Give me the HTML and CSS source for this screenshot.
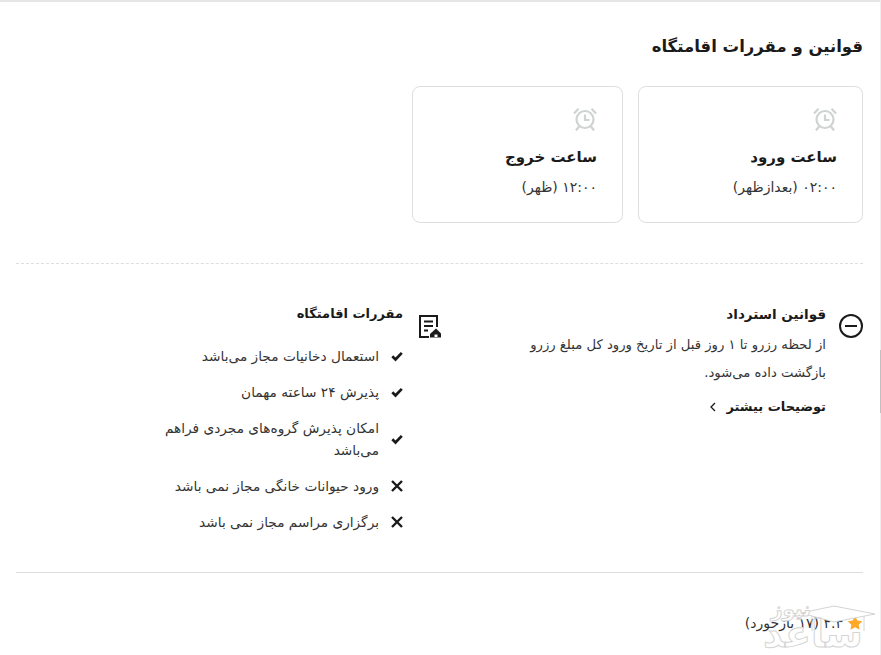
FILE: index.html
```html
<!DOCTYPE html>
<html lang="fa" dir="rtl">
<head>
<meta charset="utf-8">
<title>قوانین و مقررات اقامتگاه</title>
<link rel="stylesheet" href="styles.css">
</head>
<body>
<main class="page">
  <h2 class="title">قوانین و مقررات اقامتگاه</h2>
  <div class="cards">
    <section class="card card-in">
      <svg class="alarm" viewBox="0 0 24 24" fill="none" stroke="#cfd3d3" stroke-width="2.200"><circle cx="12" cy="12.500" r="8.500"/><path d="M12 7.500v5.500h4.500M1 6.500 5.500 1.800M23 6.500 18.500 1.800M6 19.500 3 23.500M18 19.500l3 4"/></svg>
      <h3 class="card-title">ساعت ورود</h3>
      <p class="card-text">۰۲:۰۰ (بعدازظهر)</p>
    </section>
    <section class="card card-out">
      <svg class="alarm" viewBox="0 0 24 24" fill="none" stroke="#cfd3d3" stroke-width="2.200"><circle cx="12" cy="12.500" r="8.500"/><path d="M12 7.500v5.500h4.500M1 6.500 5.500 1.800M23 6.500 18.500 1.800M6 19.500 3 23.500M18 19.500l3 4"/></svg>
      <h3 class="card-title">ساعت خروج</h3>
      <p class="card-text">۱۲:۰۰ (ظهر)</p>
    </section>
  </div>
  <hr class="dash">
  <div class="columns">
    <section class="refund">
      <svg class="minus" viewBox="0 0 24 24" fill="none" stroke="#1a1a1a" stroke-width="2"><circle cx="12" cy="12" r="11"/><path d="M6 12h12"/></svg>
      <div class="refund-body">
        <h4 class="sub">قوانین استرداد</h4>
        <p class="refund-text">از لحظه رزرو تا ۱ روز قبل از تاریخ ورود کل مبلغ رزرو بازگشت داده می‌شود.</p>
        <a class="more">توضیحات بیشتر
          <svg class="chev" viewBox="0 0 8 10" fill="none" stroke="#1a1a1a" stroke-width="1.300"><path d="M6 1 2 5l4 4"/></svg>
        </a>
      </div>
    </section>
    <section class="rules">
      <svg class="doc" viewBox="0 0 24 24" fill="none" stroke="#1a1a1a" stroke-width="2"><path d="M12 23H3V2h17v11M7 7.500h9M7 12h9M7 16.500h4"/><path d="M19 14.500l-6 5.500v3.500h11.500V20z" fill="#1a1a1a" stroke="none"/><path d="M17.500 23v-2.500h3V23" fill="#fff" stroke="none"/></svg>
      <div class="rules-body">
        <h4 class="sub sub-rules">مقررات اقامتگاه</h4>
        <ul class="list">
          <li class="item"><svg class="mark" viewBox="0 0 12 12"><path d="M1.300 6.300 4.500 9.500 10.800 2.800" fill="none" stroke="#1a1a1a" stroke-width="2.700"/></svg><span>استعمال دخانیات مجاز می‌باشد</span></li>
          <li class="item"><svg class="mark" viewBox="0 0 12 12"><path d="M1.300 6.300 4.500 9.500 10.800 2.800" fill="none" stroke="#1a1a1a" stroke-width="2.700"/></svg><span>پذیرش ۲۴ ساعته مهمان</span></li>
          <li class="item"><svg class="mark" viewBox="0 0 12 12"><path d="M1.300 6.300 4.500 9.500 10.800 2.800" fill="none" stroke="#1a1a1a" stroke-width="2.700"/></svg><span>امکان پذیرش گروه‌های مجردی فراهم می‌باشد</span></li>
          <li class="item"><svg class="mark" viewBox="0 0 12 12"><path d="M1 1l10 10M11 1 1 11" fill="none" stroke="#1a1a1a" stroke-width="2.400"/></svg><span>ورود حیوانات خانگی مجاز نمی باشد</span></li>
          <li class="item"><svg class="mark" viewBox="0 0 12 12"><path d="M1 1l10 10M11 1 1 11" fill="none" stroke="#1a1a1a" stroke-width="2.400"/></svg><span>برگزاری مراسم مجاز نمی باشد</span></li>
        </ul>
      </div>
    </section>
  </div>
  <hr class="solid">
  <div class="rating">
    <svg class="star" viewBox="0 0 24 24"><path d="M12 1l3.400 7.200 7.600 1-5.600 5.300 1.500 7.800L12 18.500l-6.900 3.800 1.500-7.800L1 9.200l7.600-1z" fill="#ffa726"/></svg>
    <span>۴.۳ (۱۷ بازخورد)</span>
  </div>
</main>
<div class="scroll-track"><div class="scroll-thumb"></div></div>
<div class="watermark">
  <svg class="cap" viewBox="0 0 76 30" fill="#fff" stroke="#d4d4d4"><path d="M1 8 34 1l41 8-41 8zM12 11v15M64 11v15"/></svg>
  <span class="wm-small">نیوز</span>
  <span class="wm-big">ساعد</span>
</div>
</body>
</html>
```
FILE: styles.css
```css
* { box-sizing: border-box; }
html, body { margin: 0; height: 655px; overflow: hidden; background: #fff; }
body { font-family: "DejaVu Sans", sans-serif; color: #1a1a1a; position: relative; }
.page { border-top: 2px solid #e6e6e6; padding: 31px 18px 0 16px; }
.title { margin: 0; font-size: 16.500px; line-height: 27px; font-weight: 700; }
.cards { display: flex; gap: 15px; margin-top: 26px; }
.card { height: 137px; border: 1px solid #dedede; border-radius: 8px; padding: 20px 25px 0; }
.card-in { width: 225px; }
.card-out { width: 211px; }
.alarm { display: block; width: 24px; height: 24px; }
.card-title { margin: 14px 0 0; font-size: 15px; line-height: 24px; font-weight: 700; }
.card-text { margin: 7px 0 0; font-size: 14px; line-height: 22px; font-weight: 400; color: #333; }
.dash { border: 0; border-top: 1px dashed #dedede; margin: 40px 0 0; }
.columns { display: flex; margin-top: 40px; height: 268px; }
.refund { width: 422px; display: flex; gap: 13px; align-items: flex-start; }
.minus { width: 24px; height: 24px; margin-top: 10px; flex: none; }
.refund-body { width: 300px; }
.sub { margin: 0; font-size: 13.500px; line-height: 20px; font-weight: 700; }
.sub-rules { font-size: 13px; }
.refund-text { margin: 7px 0 0; font-size: 13.200px; line-height: 28px; color: #333; }
.more { display: flex; align-items: center; gap: 9px; margin-top: 9px; font-size: 13px; line-height: 22px; font-weight: 700; }
.chev { width: 8px; height: 10px; }
.rules { display: flex; gap: 14px; align-items: flex-start; }
.doc { width: 24px; height: 24px; margin-top: 10px; flex: none; }
.rules-body { width: 245px; }
.list { list-style: none; margin: 14px 0 0; padding: 0; }
.item { display: flex; align-items: center; gap: 12px; padding: 7px 0; font-size: 13.700px; line-height: 22px; color: #333; }
.mark { width: 12px; height: 12px; flex: none; }
.solid { border: 0; border-top: 1px solid #dedede; margin: 0; }
.rating { display: flex; align-items: center; gap: 4px; margin: 39px 0 0; font-size: 14px; line-height: 22px; color: #333; }
.star { width: 16px; height: 16px; }
.scroll-track { position: absolute; top: 0; right: 0; width: 1px; height: 655px; background: #eee; }
.scroll-thumb { margin-top: 350px; height: 63px; background: #c0c0c0; }
.watermark { position: absolute; left: 755px; top: 597px; width: 126px; height: 58px; pointer-events: none; }
.cap { position: absolute; left: 45px; top: 8px; width: 76px; height: 30px; }
.wm-small { position: absolute; left: 16px; top: 0; font-size: 20px; font-weight: 700; line-height: 24px; color: #fff; -webkit-text-stroke: 1px #d4d4d4; }
.wm-big { position: absolute; left: 8px; top: 18px; font-size: 38px; line-height: 38px; font-weight: 700; color: transparent; -webkit-text-stroke: 1px #d4d4d4; }
```
